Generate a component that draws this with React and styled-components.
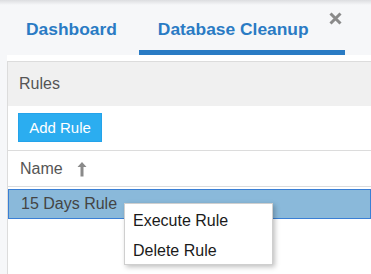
import React from "react";
import styled, { createGlobalStyle } from "styled-components";

const GlobalStyle = createGlobalStyle`
  html, body {
    margin: 0;
    padding: 0;
    background: #f6f7f9;
    font-family: "Liberation Sans", Arial, sans-serif;
    overflow: hidden;
  }
`;

const Page = styled.div`
  width: 371px;
  height: 274px;
  position: relative;
  background: #f6f7f9;
  &::before {
    content: "";
    position: absolute;
    left: 0;
    right: 0;
    top: 0;
    height: 5px;
    background: linear-gradient(#dcdde0, rgba(246, 247, 249, 0));
  }
`;

const TabBar = styled.div`
  display: flex;
  height: 55px;
  padding-left: 7px;
  column-gap: 3px;
  align-items: stretch;
`;

const Tab = styled.div`
  display: flex;
  align-items: flex-start;
  padding: 19px 19px 0 19px;
  box-sizing: border-box;
  font-size: 17.4px;
  font-weight: bold;
  color: #2a7bc4;
  border-bottom: 5px solid ${p => (p.$active ? "#2a7bc4" : "transparent")};
  padding-right: ${p => (p.$active ? "3px" : "19px")};
  white-space: nowrap;
`;

const Close = styled.svg`
  margin-left: 20px;
  margin-top: -7px;
`;

const Content = styled.div`
  margin-left: 7px;
  background: #fff;
  padding-top: 6px;
  height: 219px;
  box-sizing: border-box;
  position: relative;
`;

const Panel = styled.div`
  border-left: 1px solid #dcdcdc;
  border-top: 1px solid #dcdcdc;
  height: 100%;
`;

const PanelHeader = styled.div`
  height: 44px;
  background: #f0f0f0;
  display: flex;
  align-items: center;
  padding-left: 11px;
  font-size: 16px;
  color: #555;
`;

const Toolbar = styled.div`
  height: 45px;
  box-sizing: border-box;
  padding: 7px 0 0 10px;
  border-bottom: 1px solid #dcdcdc;
`;

const Button = styled.button`
  height: 29px;
  width: 84px;
  border: 1px solid #24a3ea;
  background: #2badf0;
  color: #fff;
  font-family: "Liberation Sans", Arial, sans-serif;
  font-size: 15px;
  padding: 0;
`;

const ColumnHeader = styled.div`
  height: 36px;
  box-sizing: border-box;
  display: flex;
  align-items: center;
  padding-left: 12px;
  column-gap: 14px;
  font-size: 16px;
  color: #555;
  border-bottom: 1px solid #dcdcdc;
`;

const Row = styled.div`
  margin-top: 2px;
  height: 30px;
  box-sizing: border-box;
  display: flex;
  align-items: center;
  padding-left: 12px;
  font-size: 16px;
  color: #444;
  background: ${p => (p.$selected ? "#8ab9da" : "#fff")};
  border: 1px solid ${p => (p.$selected ? "#3a7fd5" : "transparent")};
`;

const Menu = styled.div`
  position: absolute;
  left: 117px;
  top: 148px;
  width: 149px;
  height: 62px;
  box-sizing: border-box;
  background: #fff;
  border: 1px solid #cfcfcf;
  box-shadow: 2px 2px 5px rgba(0, 0, 0, 0.25);
  padding-top: 2px;
`;

const MenuItem = styled.div`
  height: 30px;
  display: flex;
  align-items: center;
  padding-left: 8px;
  font-size: 16px;
  color: #1a1a1a;
`;

const SortArrow = () => (
  <svg width="10" height="16" viewBox="0 0 10 16">
    <path d="M5 1 L9.5 6 H6.5 V15.5 H3.5 V6 H0.5 Z" fill="#8a8a8a" />
  </svg>
);

export default function App() {
  return (
    <>
      <GlobalStyle />
      <Page>
        <TabBar>
          <Tab>Dashboard</Tab>
          <Tab $active>
            Database Cleanup
            <Close width="13" height="13" viewBox="0 0 13 13">
              <path d="M1.5 1.5 L11.5 11.5 M11.5 1.5 L1.5 11.5" stroke="#8a8a8a" strokeWidth="3" />
            </Close>
          </Tab>
        </TabBar>
        <Content>
          <Panel>
            <PanelHeader>Rules</PanelHeader>
            <Toolbar>
              <Button>Add Rule</Button>
            </Toolbar>
            <ColumnHeader>
              Name <SortArrow />
            </ColumnHeader>
            <Row $selected>15 Days Rule</Row>
          </Panel>
          <Menu>
            <MenuItem>Execute Rule</MenuItem>
            <MenuItem>Delete Rule</MenuItem>
          </Menu>
        </Content>
      </Page>
    </>
  );
}
